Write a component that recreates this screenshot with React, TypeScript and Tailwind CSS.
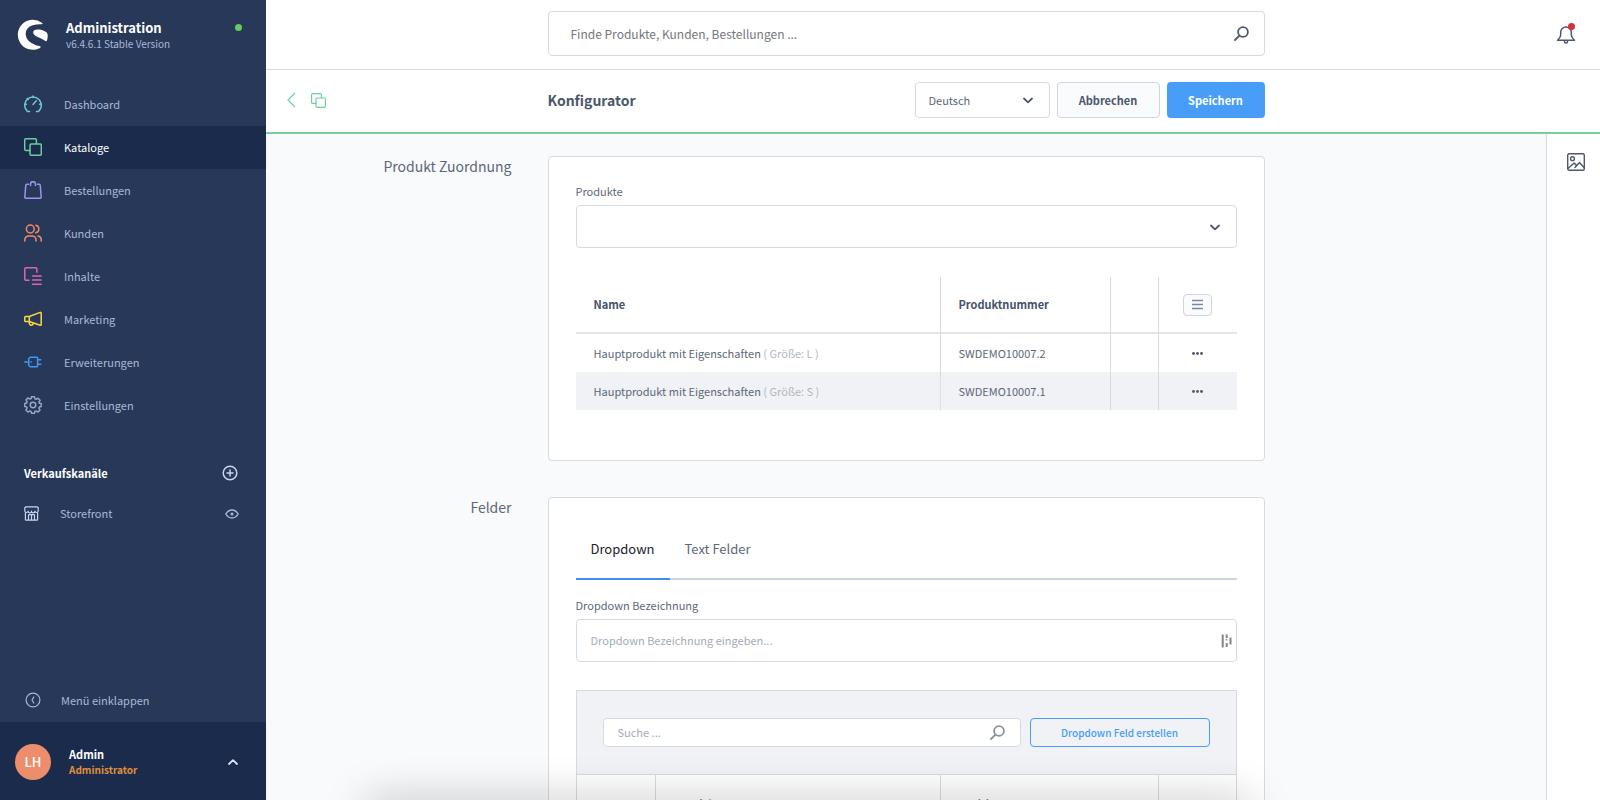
import type { ReactNode, SVGProps } from 'react';

function Svg({ size = 18, w = 24, sw = 2, children, ...rest }: SVGProps<SVGSVGElement> & { size?: number; w?: number; sw?: number; children: ReactNode }) {
  return (
    <svg width={size} height={size} viewBox={`0 0 ${w} ${w}`} fill="none" stroke="currentColor" strokeWidth={sw} strokeLinecap="round" strokeLinejoin="round" aria-hidden="true" {...rest}>
      {children}
    </svg>
  );
}

const Products = ({ size = 18, sw = 1 }: { size?: number; sw?: number }) => (
  <Svg size={size} w={18} sw={sw}>
    <path d="M5.700 12.400H2a1.300 1.300 0 0 1-1.300-1.300V2A1.300 1.300 0 0 1 2 .7h9.100A1.300 1.300 0 0 1 12.400 2v3.500" />
    <rect x="6" y="6" width="11.300" height="11.300" rx="1.300" />
  </Svg>
);

const Chevron = ({ up = false }: { up?: boolean }) => (
  <Svg size={10} w={10} sw={1.8}>
    <path d={up ? 'M1 7 5 3.200 9 7' : 'M1 3.500 5 7.300 9 3.500'} />
  </Svg>
);

const Magnifier = () => (
  <Svg size={15} w={15} sw={1.8}>
    <circle cx="9" cy="6" r="4.900" />
    <path d="M5.400 9.600 1 14" />
  </Svg>
);

const icons: Record<string, ReactNode> = {
  Dashboard: (
    <Svg w={18} sw={1.5}>
      <path d="M5.500 16.400H3.400A8.300 8.300 0 1 1 14.600 16.400h-2.100" />
      <path d="M9 .9v1.600M.8 9.200h1.600M15.600 9.200h1.600M3.200 3.500l1 1M9 9.500l3.300-3.700" />
    </Svg>
  ),
  Kataloge: <Products sw={1.5} />,
  Bestellungen: (
    <Svg w={18} sw={1.5}>
      <path d="M4.500 3.200H2.800a1 1 0 0 0-1 .9L.8 16a1.200 1.200 0 0 0 1.200 1.300h14A1.200 1.200 0 0 0 17.200 16L16.200 4.100a1 1 0 0 0-1-.9h-1.700" />
      <path d="M6.500 4.600V3.200a2.500 2.500 0 0 1 5 0v1.400" />
    </Svg>
  ),
  Kunden: (
    <Svg w={18} sw={1.5}>
      <circle cx="6.300" cy="5" r="3.900" />
      <path d="M.8 17v-1.200a3.800 3.800 0 0 1 3.800-3.800h3.600a3.800 3.800 0 0 1 3.800 3.800V17M11.800 1.200a3.900 3.900 0 0 1 0 7.600M14 12a3.800 3.800 0 0 1 3.200 3.800V17" />
    </Svg>
  ),
  Inhalte: (
    <Svg w={18} sw={1.5}>
      <path d="M5 13.200H2A1.200 1.200 0 0 1 .8 12V2A1.200 1.200 0 0 1 2 .8h9.700A1.200 1.200 0 0 1 12.900 2v3.200M8.500 9h8.700M8.500 13.100h8.700M8.500 17.200h8.700" />
    </Svg>
  ),
  Marketing: (
    <Svg w={18} sw={1.5}>
      <path d="M5.300 6.500 16.200 2.400a.8.8 0 0 1 1 .8v11.200a.8.800 0 0 1-1 .8L5.300 11.500zM5.300 6.500H1.600a.8.800 0 0 0-.8.800v3.400a.8.800 0 0 0 .8.800h3.700M5.300 12v1a2 2 0 0 0 4 .3" />
    </Svg>
  ),
  Erweiterungen: (
    <Svg w={18} sw={1.5}>
      <path d="M.8 9h4M6.200 4.300h6.600a.8.800 0 0 1 .8.800v7.800a.8.800 0 0 1-.8.800H6.200l-1.500-1.500V5.800zM13.800 6.700h3M13.800 11.300h3" />
      <path d="M6.800 9h.4" />
    </Svg>
  ),
  Einstellungen: (
    <Svg w={24} sw={1.9}>
      <circle cx="12" cy="12" r="3.700" />
      <path d="M10 1h4l.6 2.800 1.600.7 2.500-1.600 2.800 2.800-1.600 2.500.7 1.600L23 10v4l-2.500.6-.7 1.600 1.600 2.500-2.800 2.800-2.500-1.600-1.600.7L14 23h-4l-.6-2.500-1.600-.7-2.500 1.600-2.800-2.800 1.600-2.500-.7-1.600L1 14v-4l2.500-.6.7-1.600-1.600-2.500 2.800-2.800 2.500 1.600 1.600-.7z" />
    </Svg>
  ),
};

const nav = [
  { name: 'Dashboard', color: 'text-[#6fc6d9]' },
  { name: 'Kataloge', color: 'text-[#68d0a0]' },
  { name: 'Bestellungen', color: 'text-[#a092f0]' },
  { name: 'Kunden', color: 'text-[#ee8a68]' },
  { name: 'Inhalte', color: 'text-[#d966b8]' },
  { name: 'Marketing', color: 'text-[#fbd83c]' },
  { name: 'Erweiterungen', color: 'text-[#3f98f5]' },
  { name: 'Einstellungen', color: 'text-[#98a8c6]' },
];

const products = [
  { size: 'L', number: 'SWDEMO10007.2' },
  { size: 'S', number: 'SWDEMO10007.1' },
];

function Sidebar() {
  return (
    <aside className="flex w-[266px] shrink-0 flex-col bg-[#283858] text-[#a8b8d8]">
      <div className="flex h-[83px] items-start pt-[19px] pr-6 pl-[17px]">
        <svg width="31" height="31" viewBox="0 0 31 31" fill="#fff" aria-hidden="true">
          <path d="M24.800 3.800A15 15 0 1 0 22.500 29.200c1.800-.8 1.700-1.600-.2-2.100C14.500 25.200 8.600 21 8.700 14.500 8.800 8.600 14.500 4.600 24.800 5.200c1 0 .9-.7 0-1.400z" />
          <path d="M30.700 16.200c0-3.800-5.900-5.600-10.200-5.600-2.600 0-4.500 1.200-4.300 3.200.4 3.500 6.700 4.500 12.300 8.200.7.400 1.100.2 1.400-.5.600-1.500.8-3.200.8-5.300z" />
        </svg>
        <div className="ml-[18px] flex-1">
          <div className="text-[13px] leading-[18px] font-bold text-white">Administration</div>
          <div className="text-[10px] leading-[14px]">v6.4.6.1 Stable Version</div>
        </div>
        <span className="mt-[5px] size-[7px] rounded-full bg-[#68cb5c]" />
      </div>
      <nav>
        {nav.map(({ name, color }) => (
          <a
            key={name}
            href="#"
            className={`flex h-[43px] items-center gap-[22px] pb-px pl-6 ${name === 'Kataloge' ? 'bg-[#1a2b4b] text-white' : ''}`}
          >
            <span className={color}>{icons[name]}</span>
            {name}
          </a>
        ))}
      </nav>
      <div className="mt-[26px] flex h-10 items-center justify-between pr-7 pl-6 font-bold text-white">
        Verkaufskanäle
        <button type="button" aria-label="Verkaufskanal hinzufügen" className="text-[#c9d5ef]">
          <Svg size={16} w={16} sw={1.500}>
            <circle cx="8" cy="8" r="6.800" />
            <path d="M8 5v6M5 8h6" />
          </Svg>
        </button>
      </div>
      <div className="flex h-10 items-center pr-[27px] pl-6">
        <span className="text-[#c9d5ef]">
          <Svg size={15} w={15} sw={1.2}>
            <path d="M2 .8h11l1.200 1v3.400a1.700 1.700 0 0 1-3.300 0 1.700 1.700 0 0 1-3.400 0 1.700 1.700 0 0 1-3.400 0 1.700 1.700 0 0 1-3.300 0V1.800zM1.400 7v6.400a.8.800 0 0 0 .8.800h10.600a.8.800 0 0 0 .8-.8V7M4.500 14V9.500a.8.800 0 0 1 .8-.8h4.400a.8.800 0 0 1 .8.800V14M7.500 9v5" />
          </Svg>
        </span>
        <a href="#" className="ml-[21px] flex-1">Storefront</a>
        <button type="button" aria-label="Storefront ansehen">
          <Svg size={14} w={14} sw={1.4}>
            <path d="M.8 8C2.400 5.400 4.500 4 7 4s4.600 1.400 6.200 4c-1.600 2.600-3.700 4-6.200 4S2.400 10.600.8 8z" />
            <circle cx="7" cy="8" r=".8" />
          </Svg>
        </button>
      </div>
      <button type="button" className="mt-auto flex h-[43px] items-center gap-5 pb-px pl-[25px] text-left">
        <Svg size={16} w={16} sw={1.200}>
          <circle cx="8" cy="8" r="6.900" />
          <path d="M8.800 5 7 8l1.800 3" />
        </Svg>
        Menü einklappen
      </button>
      <div className="flex h-[78px] items-center bg-[#1a2b4b] pt-[2px] pr-7 pl-[15px]">
        <span className="flex size-9 items-center justify-center rounded-full bg-[#ec8e6b] text-[13px] font-medium text-white">LH</span>
        <div className="ml-[18px] flex-1 leading-4 font-bold">
          <div className="text-white">Admin</div>
          <div className="text-[10px] text-[#e08f3c]">Administrator</div>
        </div>
        <button type="button" aria-label="Benutzermenü" className="text-[#dbe4f7]">
          <Chevron up />
        </button>
      </div>
    </aside>
  );
}

function Section({ title, children }: { title: string; children: ReactNode }) {
  return (
    <section className="grid grid-cols-[1fr_minmax(0,717px)_1fr]">
      <h2 className="pr-9 text-right text-[14px] leading-[20px] text-[#5c6779]">{title}</h2>
      <div className="rounded border border-[#d6dbe2] bg-white px-[27px]">{children}</div>
    </section>
  );
}

export default function App() {
  return (
    <div className="relative flex h-screen overflow-hidden bg-[#f9fafc] font-['Noto_Sans_CJK_SC','Source_Sans_Pro',sans-serif] text-[11px] text-[#5c6779]">
      <Sidebar />
      <div className="flex min-w-0 flex-1 flex-col">
        <header className="flex h-[70px] shrink-0 items-start border-b border-[#d6dbe2] bg-white pt-[11px]">
          <div className="grid flex-1 grid-cols-[1fr_minmax(0,717px)_1fr]">
            <label className="col-start-2 flex h-[45px] items-center rounded border border-[#d6dbe2] pr-[15px] pl-[22px] text-[#4c566c]">
              <input aria-label="Suche" placeholder="Finde Produkte, Kunden, Bestellungen ..." className="min-w-0 flex-1 text-[12px] outline-none placeholder:text-[#74777c]" />
              <Magnifier />
            </label>
          </div>
          <div className="flex h-[45px] w-[54px] items-center pl-[10px]">
            <button type="button" aria-label="Benachrichtigungen" className="relative text-[#4c566c]">
              <Svg size={20} w={20} sw={1.500}>
                <path d="M1.500 16.200h17c-1.400-1.400-3.200-2.400-3.200-5.400V8.300a5.300 5.300 0 0 0-10.600 0v2.500c0 3-1.800 4-3.200 5.400zM8.500 17.500a1.500 1.500 0 0 0 3 0" />
              </Svg>
              <span className="absolute -top-px right-px size-[7px] rounded-full bg-[#d5303e]" />
            </button>
          </div>
        </header>

        <div className="flex h-16 shrink-0 border-b-2 border-[#74cf98] bg-white">
          <div className="grid flex-1 grid-cols-[1fr_minmax(0,717px)_1fr] items-center pb-[2px]">
            <div className="flex items-center gap-[15px] pl-[21px] text-[#68d0a0]">
              <a href="#" aria-label="Zurück">
                <svg width="9" height="16" viewBox="0 0 9 16" fill="none" stroke="currentColor" strokeWidth="1.200" aria-hidden="true">
                  <path d="M8 1 1 8l7 7" />
                </svg>
              </a>
              <Products size={15} sw={1.400} />
            </div>
            <div className="flex items-center gap-[7px]">
              <h1 className="flex-1 text-[14px] font-bold text-[#4c566c]">Konfigurator</h1>
              <div className="relative">
                <select aria-label="Sprache" className="block h-9 w-[135px] appearance-none rounded border border-[#d6dbe2] bg-white pl-[13px]">
                  <option>Deutsch</option>
                </select>
                <span className="pointer-events-none absolute inset-y-0 right-[17px] flex items-center text-[#4c566c]">
                  <Chevron />
                </span>
              </div>
              <button type="button" className="h-9 w-[103px] rounded border border-[#cfd5dd] bg-[#f9fbfd] font-bold text-[#4c566c]">Abbrechen</button>
              <button type="button" className="h-9 w-[98px] rounded bg-[#479df8] font-bold text-white">Speichern</button>
            </div>
          </div>
          <div className="w-[54px]" />
        </div>

        <div className="flex min-h-0 flex-1">
          <main className="flex flex-1 flex-col gap-9 overflow-hidden pt-[22px]">
            <Section title="Produkt Zuordnung">
              <label htmlFor="products" className="mt-[25px] block leading-[18px]">Produkte</label>
              <div className="relative mt-[5px]">
                <select id="products" className="block h-[43px] w-full appearance-none rounded border border-[#d6dbe2] bg-white px-4">
                  <option></option>
                </select>
                <span className="pointer-events-none absolute inset-y-0 right-[17px] flex items-center text-[#4c566c]">
                  <Chevron />
                </span>
              </div>
              <table className="mt-[29px] mb-[50px] w-full table-fixed border-separate border-spacing-0 text-left">
                <colgroup>
                  <col />
                  <col className="w-[170px]" />
                  <col className="w-12" />
                  <col className="w-[79px]" />
                </colgroup>
                <thead>
                  <tr className="h-[57px] text-[#46516a] [&>th]:border-b-2 [&>th]:border-b-[#e3e6ea] [&>th+th]:border-l [&>th+th]:border-l-[#d6dbe2]">
                    <th className="px-[18px] font-bold">Name</th>
                    <th className="px-[18px] font-bold">Produktnummer</th>
                    <th />
                    <th>
                      <button type="button" aria-label="Spalten" className="mx-auto flex h-[22px] w-[29px] items-center justify-center rounded border border-[#cfd5dd] bg-[#f9fbfd] text-[#7c88a3]">
                        <svg width="11" height="11" viewBox="0 0 11 11" stroke="currentColor" strokeWidth="1.400" aria-hidden="true">
                          <path d="M0 1.500h11M0 5.500h11M0 9.500h11" />
                        </svg>
                      </button>
                    </th>
                  </tr>
                </thead>
                <tbody>
                  {products.map((p) => (
                    <tr key={p.number} className="h-[38px] even:bg-[#f0f2f5] [&>td+td]:border-l [&>td+td]:border-l-[#d6dbe2]">
                      <td className="px-[18px]">
                        Hauptprodukt mit Eigenschaften <span className="text-[#b0b7c1]">( Größe: {p.size} )</span>
                      </td>
                      <td className="px-[18px]">{p.number}</td>
                      <td />
                      <td>
                        <button type="button" aria-label="Aktionen" className="mx-auto block text-[#4c566c]">
                          <svg width="11" height="3" viewBox="0 0 11 3" fill="currentColor" aria-hidden="true">
                            <circle cx="1.500" cy="1.500" r="1.400" />
                            <circle cx="5.500" cy="1.500" r="1.400" />
                            <circle cx="9.500" cy="1.500" r="1.400" />
                          </svg>
                        </button>
                      </td>
                    </tr>
                  ))}
                </tbody>
              </table>
            </Section>

            <Section title="Felder">
              <div role="tablist" className="mt-[22px] flex border-b-2 border-[#cdd3dc] text-[13px]">
                <button type="button" role="tab" aria-selected="true" className="-mb-[2px] h-[60px] border-b-2 border-[#3f8df0] px-[15px] text-[#1d2129]">Dropdown</button>
                <button type="button" role="tab" aria-selected="false" className="h-[58px] px-[15px]">Text Felder</button>
              </div>
              <label htmlFor="caption" className="mt-4 block leading-[18px]">Dropdown Bezeichnung</label>
              <div className="mt-[5px] flex h-[43px] items-center rounded border border-[#d6dbe2] pr-1 pl-[14px]">
                <input id="caption" placeholder="Dropdown Bezeichnung eingeben..." className="min-w-0 flex-1 outline-none placeholder:text-[#a4abb6]" />
                <svg width="11" height="14" viewBox="0 0 11 14" fill="#858585" aria-hidden="true">
                  <path d="M.7.500h2v13h-2zM4.700.500h2v3.500h-2zM4.700 9h2v4h-2zM8.500 3.500h2v7h-2zM4.700 5h1.500v1.500H4.700z" />
                </svg>
              </div>
              <div className="mt-7 border border-[#d6dbe2]">
                <div className="flex h-[83px] items-center gap-[9px] bg-[#f0f2f5] px-[26px]">
                  <label className="flex h-[29px] flex-1 items-center rounded border border-[#d6dbe2] bg-white pr-[15px] pl-[14px] text-[#8a92a0]">
                    <input aria-label="Felder suchen" placeholder="Suche ..." className="min-w-0 flex-1 outline-none placeholder:text-[#a4abb6]" />
                    <Magnifier />
                  </label>
                  <button type="button" className="h-[29px] w-[180px] rounded border border-[#479df8] text-[10px] font-medium text-[#479df8]">Dropdown Feld erstellen</button>
                </div>
                <table className="w-full table-fixed border-separate border-spacing-0 text-left">
                  <colgroup>
                    <col className="w-[78px]" />
                    <col />
                    <col className="w-[218px]" />
                    <col className="w-[78px]" />
                  </colgroup>
                  <thead>
                    <tr className="h-[59px] text-[#46516a] [&>th]:border-t [&>th]:border-[#d6dbe2] [&>th+th]:border-l">
                      <th />
                      <th className="px-[18px] font-bold">Bezeichnung</th>
                      <th className="px-[18px] font-bold">Position</th>
                      <th />
                    </tr>
                  </thead>
                </table>
              </div>
            </Section>
          </main>
          <aside className="flex w-[54px] shrink-0 justify-center border-l border-[#d6dbe2] bg-white pt-[19px] pl-1">
            <button type="button" aria-label="Medien" className="h-[18px] text-[#4c566c]">
              <Svg w={18} sw={1.400}>
                <rect x=".7" y=".7" width="16.600" height="16.600" rx="1.500" />
                <circle cx="5.500" cy="5.700" r="1.900" />
                <path d="m1.500 15 5.700-5 2.200 2.500M8 14.500l4.500-5 4.700 5.300" />
              </Svg>
            </button>
          </aside>
        </div>
      </div>
      <div className="pointer-events-none absolute right-[350px] -bottom-5 left-[366px] h-5 shadow-[0_0_40px_rgba(0,0,0,0.28)]" />
    </div>
  );
}
